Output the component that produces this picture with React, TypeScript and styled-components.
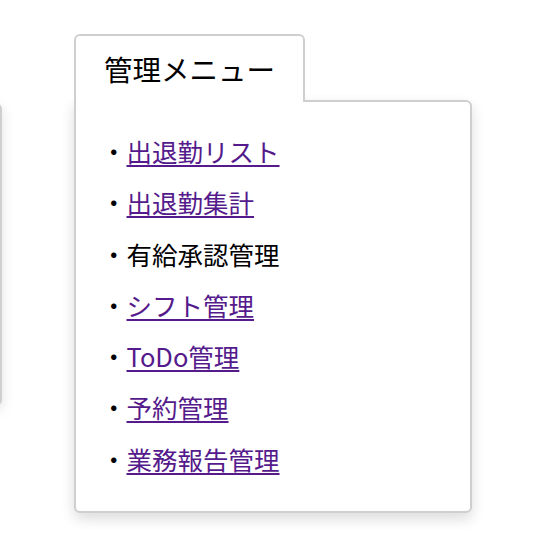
import { createGlobalStyle, styled } from "styled-components"

const GlobalStyle = createGlobalStyle`
    body {
        margin: 0;
        background: #ffffff;
        font-family: "Noto Sans CJK JP", "Noto Sans", sans-serif;
        color: #000000;
    }
`
const Page = styled.div`
    display: flex;
    align-items: flex-start;
    width: 536px;
    height: 542px;
    overflow: hidden;
`
const SideCard = styled.div`
    flex: none;
    box-sizing: border-box;
    width: 300px;
    height: 303px;
    margin: 103px 0 0 -298px;
    border: 2px solid #cfcfcf;
    border-radius: 6px;
    background: #ffffff;
    box-shadow: 0 4px 14px rgba(0, 0, 0, 0.12);
`
const Menu = styled.section`
    flex: none;
    margin: 34px 0 0 72px;
    display: flex;
    flex-direction: column;
    align-items: flex-start;
`
const Tab = styled.div`
    position: relative;
    z-index: 1;
    box-sizing: border-box;
    width: 231px;
    height: 68px;
    margin-bottom: -2px;
    border: 2px solid #cfcfcf;
    border-bottom: none;
    border-radius: 6px 6px 0 0;
    background: #ffffff;
    display: flex;
    align-items: center;
    justify-content: center;
    font-size: 28.5px;
    padding-bottom: 2px;
`
const Panel = styled.div`
    box-sizing: border-box;
    width: 398px;
    border: 2px solid #cfcfcf;
    border-radius: 0 6px 6px 6px;
    background: #ffffff;
    box-shadow: 0 6px 14px rgba(0, 0, 0, 0.14);
`
const List = styled.ul`
    list-style: none;
    margin: 0;
    padding: 30px 0 34px 25px;
    display: flex;
    flex-direction: column;
    gap: 13.8px;
`
const Item = styled.li`
    font-size: 25.5px;
    line-height: 37.5px;
    white-space: nowrap;

    &::before {
        content: "・";
    }
`
const Link = styled.a`
    color: #551a8b;
    text-decoration: underline;
    text-underline-offset: 3px;
`

const items = [
    { label: "出退勤リスト", link: true },
    { label: "出退勤集計", link: true },
    { label: "有給承認管理", link: false },
    { label: "シフト管理", link: true },
    { label: "ToDo管理", link: true },
    { label: "予約管理", link: true },
    { label: "業務報告管理", link: true },
]

export default function App() {
    return (
        <>
            <GlobalStyle />
            <Page>
                <SideCard />
                <Menu>
                    <Tab>管理メニュー</Tab>
                    <Panel>
                        <List>
                            {items.map((item) => (
                                <Item key={item.label}>
                                    {item.link ? <Link href="#">{item.label}</Link> : item.label}
                                </Item>
                            ))}
                        </List>
                    </Panel>
                </Menu>
            </Page>
        </>
    )
}
